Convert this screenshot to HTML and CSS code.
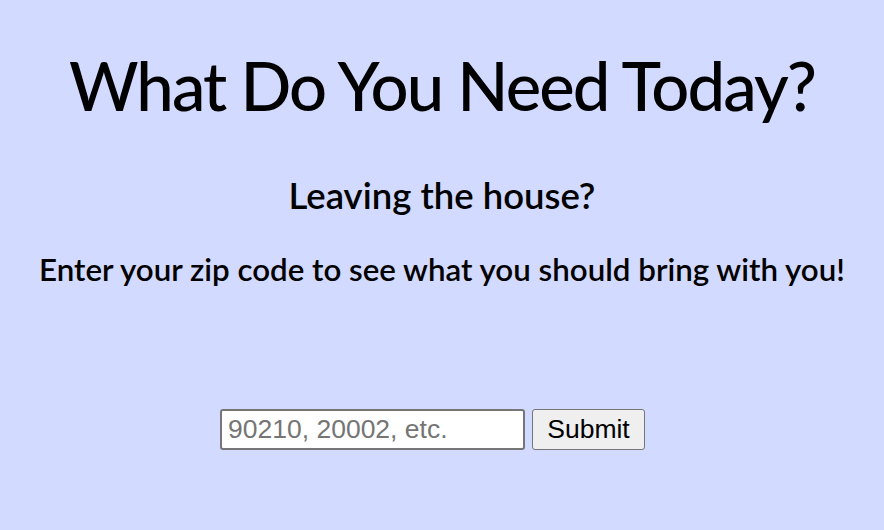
FILE: index.html
```html
<!DOCTYPE html>
<html>
<head>
<meta charset="utf-8">
<link rel="stylesheet" href="styles.css">
</head>
<body>
<main class="page">
  <h1 class="title">What Do You Need Today?</h1>
  <h2 class="subtitle">Leaving the house?</h2>
  <p class="lead">Enter your zip code to see what you should bring with you!</p>
  <form class="zip-form">
    <input class="zip-input" type="text" placeholder="90210, 20002, etc.">
    <button class="zip-submit" type="button">Submit</button>
  </form>
</main>
</body>
</html>
```
FILE: styles.css
```css
html, body {
  margin: 0;
  padding: 0;
  background: #d2daff;
  height: 100%;
}
.page {
  font-family: "Lato", "Liberation Sans", sans-serif;
  color: #000;
  text-align: center;
  padding-top: 44px;
}
.title {
  font-size: 67px;
  font-weight: 500;
  letter-spacing: -1.9px;
  margin: 0;
  line-height: 82px;
}
.subtitle {
  font-size: 36.5px;
  font-weight: 600;
  margin: 48px 0 0;
  line-height: 42px;
}
.lead {
  font-size: 31.3px;
  font-weight: 600;
  margin: 35px 0 0;
  line-height: 36px;
}
.zip-form {
  display: flex;
  justify-content: center;
  align-items: center;
  gap: 7px;
  margin-top: 122px;
  padding-right: 19px;
}
.zip-input {
  box-sizing: border-box;
  width: 305px;
  height: 41px;
  border: 2px solid #767676;
  border-radius: 3px;
  padding: 0 6px;
  font-family: "Liberation Sans", Arial, sans-serif;
  font-size: 26.5px;
  background: #fff;
}
.zip-input::placeholder {
  color: #757575;
}
.zip-submit {
  box-sizing: border-box;
  width: 113px;
  height: 41px;
  border: 1px solid #767676;
  border-radius: 3px;
  background: #efefef;
  font-family: "Liberation Sans", Arial, sans-serif;
  font-size: 26.5px;
  color: #000;
  padding: 0;
}
```
